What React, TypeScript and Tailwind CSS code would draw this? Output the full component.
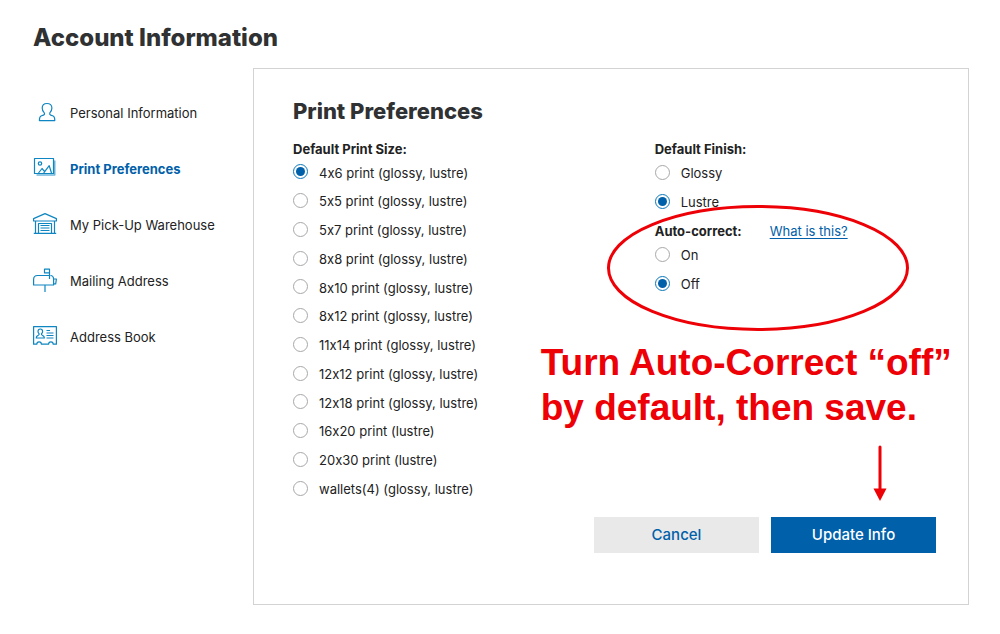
import type { ReactNode } from "react";

const sizes = [
  "4x6 print (glossy, lustre)",
  "5x5 print (glossy, lustre)",
  "5x7 print (glossy, lustre)",
  "8x8 print (glossy, lustre)",
  "8x10 print (glossy, lustre)",
  "8x12 print (glossy, lustre)",
  "11x14 print (glossy, lustre)",
  "12x12 print (glossy, lustre)",
  "12x18 print (glossy, lustre)",
  "16x20 print (lustre)",
  "20x30 print (lustre)",
  "wallets(4) (glossy, lustre)",
];

function Icon({ children }: { children: ReactNode }) {
  return (
    <svg
      className="mb-1 size-6 shrink-0 text-[#0f86c1]"
      viewBox="0 0 24 24"
      fill="none"
      stroke="currentColor"
      strokeWidth="1.2"
      strokeLinejoin="round"
      aria-hidden="true"
    >
      {children}
    </svg>
  );
}

const navItems: { label: string; icon: ReactNode; current?: boolean }[] = [
  {
    label: "Personal Information",
    icon: (
      <path d="M14 3.500c-3 0-4.800 1.900-4.800 4.600 0 2.200.9 3.700 2.100 4.800.5 1.200.2 1.800-.9 2.200l-2.400.9c-1.200.5-1.600 1.600-1.600 4.600h15.400c0-3-.4-4.100-1.600-4.600l-2.500-.9c-1.100-.4-1.300-1-.9-2.200 1.200-1.100 2.100-2.600 2.100-4.800 0-2.700-1.900-4.600-4.900-4.600z" />
    ),
  },
  {
    label: "Print Preferences",
    current: true,
    icon: (
      <>
        <path d="M1.500 2.500h19v15h-19z" />
        <path d="M21.700 4.500v14.500h-18.200" strokeWidth="1.600" opacity="0.6" />
        <circle cx="7" cy="7.500" r="1.700" />
        <path d="M5.500 17l3.500-4.500 2.700 3.200 4.500-6 2.300 7.300M11.700 15.700l-1 1.300" />
      </>
    ),
  },
  {
    label: "My Pick-Up Warehouse",
    icon: (
      <>
        <path d="M.6 9V6.600L12 1.600l11.400 5V9H.6zM2.500 9v12.400M21.500 9v12.400M.8 21.400h4.700V11.500h13v9.900h4.700M5.500 21.400h13" />
        <path d="M7.500 13.500h9M7.500 16h9M7.500 18.500h9" />
      </>
    ),
  },
  {
    label: "Mailing Address",
    icon: (
      <>
        <path d="M16.500 7.500H4.500C2 7.500.6 9 .6 11.500v5.500h20v-5.500c0-2.200-1.300-4-3.200-4M20.600 11h2.800l-.7 4.800h-2.100M12 17v7" />
        <path d="M16.500 11V1.200h-5v3.600h5" />
      </>
    ),
  },
  {
    label: "Address Book",
    icon: (
      <>
        <path d="M.600 2.600h22.800v17.600h-3.200a2.300 2.300 0 0 0-4.600 0H8.400a2.300 2.300 0 0 0-4.600 0H.600z" />
        <path d="M7.300 5c-1.500 0-2.300 1-2.300 2.400 0 1.100.5 1.900 1.100 2.400.2.900-.1 1.200-.9 1.500-1.500.4-2 .9-2 2.700h8.200c0-1.800-.5-2.300-2-2.700-.8-.3-1.100-.6-.9-1.500.6-.5 1.100-1.300 1.100-2.400C9.600 6 8.800 5 7.300 5z" />
        <path d="M13.500 6.500h3.500M13.500 9h7M13.500 11.500h7M13.500 14h7" />
      </>
    ),
  },
];

function Radio({ name, label, checked }: { name: string; label: string; checked?: boolean }) {
  return (
    <label className="flex h-[29px] items-center gap-[11px] text-[13px]">
      <input
        type="radio"
        name={name}
        defaultChecked={checked}
        className="mb-[3px] size-[15px] shrink-0 appearance-none rounded-full border border-[#a8a8a8] bg-clip-content p-[2px] checked:border-[#0a78bb] checked:bg-[#0060a9]"
      />
      {label}
    </label>
  );
}

export default function App() {
  return (
    <div className="bg-white pt-5 pr-[31px] pb-7 pl-[33px] font-['Inter','Liberation_Sans',sans-serif] text-[#222] [font-feature-settings:'calt'_0]">
      <h1 className="text-2xl leading-9 font-extrabold text-[#2f3132]">Account Information</h1>

      <div className="mt-3 flex">
        <nav aria-label="Account" className="w-[220px] shrink-0 pt-8">
          <ul className="flex flex-col gap-7">
            {navItems.map((item) => (
              <li key={item.label}>
                <a
                  href="#"
                  aria-current={item.current ? "page" : undefined}
                  className={
                    item.current
                      ? "flex h-7 items-center gap-[13px] text-[13px] font-bold text-[#0060a9]"
                      : "flex h-7 items-center gap-[13px] text-[13px]"
                  }
                >
                  <Icon>{item.icon}</Icon>
                  {item.label}
                </a>
              </li>
            ))}
          </ul>
        </nav>

        <main className="flex-1 border border-[#d3d3d3] pt-6 pr-8 pb-[51px] pl-[39px]">
          <form onSubmit={(e) => e.preventDefault()}>
            <h2 className="text-[22px] leading-9 font-extrabold text-[#2f3132]">Print Preferences</h2>

            <div className="mt-[10px] grid grid-cols-[9fr_7fr]">
              <fieldset>
                <legend className="text-[13px] leading-5 font-bold">Default Print Size:</legend>
                <div className="flex h-[345px] flex-col justify-between">
                  {sizes.map((size, i) => (
                    <Radio key={size} name="size" label={size} checked={i === 0} />
                  ))}
                </div>
              </fieldset>

              <div className="relative">
                <fieldset>
                  <legend className="text-[13px] leading-5 font-bold">Default Finish:</legend>
                  <Radio name="finish" label="Glossy" />
                  <Radio name="finish" label="Lustre" checked />
                </fieldset>
                <fieldset className="mt-1" aria-labelledby="auto-correct">
                  <div className="flex gap-7 text-[13px] leading-5">
                    <span id="auto-correct" className="font-bold">
                      Auto-correct:
                    </span>
                    <a href="#" className="text-[#0060a9] underline underline-offset-2">
                      What is this?
                    </a>
                  </div>
                  <Radio name="auto" label="On" />
                  <Radio name="auto" label="Off" checked />
                </fieldset>

                <svg
                  className="pointer-events-none absolute top-[65px] -left-[49px] h-[128px] w-[304px]"
                  viewBox="0 0 304 128"
                  fill="none"
                  aria-hidden="true"
                >
                  <ellipse cx="152" cy="64" rx="149.500" ry="61.500" stroke="#ed0006" strokeWidth="3" />
                </svg>
                <p className="absolute top-[201px] -left-[114px] font-['Liberation_Sans',Arial,sans-serif] text-[37px] leading-[45px] font-bold whitespace-nowrap text-[#ed0006]">
                  Turn Auto-Correct “off”
                  <br />
                  by default, then save.
                </p>
                <svg
                  className="pointer-events-none absolute top-[306px] left-[218px] h-14 w-[14px]"
                  viewBox="0 0 14 56"
                  aria-hidden="true"
                >
                  <path d="M7 2v44" stroke="#ed0006" strokeWidth="3" strokeLinecap="round" />
                  <path d="M.5 43.500h13L7 56z" fill="#ed0006" />
                </svg>
              </div>
            </div>

            <div className="mt-[13px] flex justify-end gap-3 text-[15px] font-medium">
              <button type="button" className="h-9 w-[165px] bg-[#e9e9e9] text-[#0060a9]">
                Cancel
              </button>
              <button type="submit" className="h-9 w-[165px] bg-[#0060a9] text-white">
                Update Info
              </button>
            </div>
          </form>
        </main>
      </div>
    </div>
  );
}
